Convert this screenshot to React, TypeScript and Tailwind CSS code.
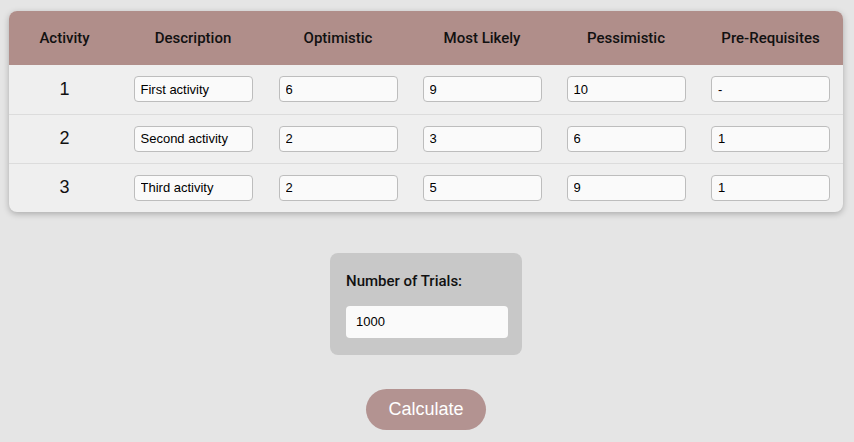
import { useState } from 'react'

type Row = {
  id: number
  description: string
  optimistic: string
  mostLikely: string
  pessimistic: string
  prereq: string
}

const initialRows: Row[] = [
  { id: 1, description: 'First activity', optimistic: '6', mostLikely: '9', pessimistic: '10', prereq: '-' },
  { id: 2, description: 'Second activity', optimistic: '2', mostLikely: '3', pessimistic: '6', prereq: '1' },
  { id: 3, description: 'Third activity', optimistic: '2', mostLikely: '5', pessimistic: '9', prereq: '1' },
]

const headers = ['Activity', 'Description', 'Optimistic', 'Most Likely', 'Pessimistic', 'Pre-Requisites']

const CellInput = ({ value, onChange }: { value: string; onChange: (v: string) => void }) => (
  <input
    className="h-[26px] w-[119px] rounded-[4px] border border-[#bdbdbd] bg-[#fafafa] px-[6px] font-['Liberation_Sans',Arial,sans-serif] text-[13px] text-black outline-none"
    value={value}
    onChange={(e) => onChange(e.target.value)}
  />
)

export default function App() {
  const [rows, setRows] = useState(initialRows)
  const [trials, setTrials] = useState('1000')

  const update = (id: number, key: keyof Row, v: string) =>
    setRows((rs) => rs.map((r) => (r.id === id ? { ...r, [key]: v } : r)))

  return (
    <div className="min-h-[442px] bg-[#e5e5e5] pl-[9px] pr-[11px] pt-[11px] font-['Roboto',sans-serif]">
      <div className="overflow-hidden rounded-[8px] bg-[#efefef] shadow-[0_2px_6px_rgba(0,0,0,0.25)]">
        <table className="w-full table-fixed border-collapse">
          <colgroup>
            <col className="w-[111px]" />
            <col className="w-[146px]" />
            <col className="w-[144px]" />
            <col className="w-[144px]" />
            <col className="w-[144px]" />
            <col className="w-[145px]" />
          </colgroup>
          <thead>
            <tr className="h-[54px] bg-[#b08e8a]">
              {headers.map((h) => (
                <th key={h} className="text-center text-[15px] font-medium text-[#111]">
                  {h}
                </th>
              ))}
            </tr>
          </thead>
          <tbody>
            {rows.map((r, i) => (
              <tr key={r.id} className={`h-[49px] ${i > 0 ? 'border-t border-[#dcdcdc]' : ''}`}>
                <td className="text-center font-['Liberation_Sans',Arial,sans-serif] text-[18px] text-[#111]">{r.id}</td>
                <td className="text-center">
                  <CellInput value={r.description} onChange={(v) => update(r.id, 'description', v)} />
                </td>
                <td className="text-center">
                  <CellInput value={r.optimistic} onChange={(v) => update(r.id, 'optimistic', v)} />
                </td>
                <td className="text-center">
                  <CellInput value={r.mostLikely} onChange={(v) => update(r.id, 'mostLikely', v)} />
                </td>
                <td className="text-center">
                  <CellInput value={r.pessimistic} onChange={(v) => update(r.id, 'pessimistic', v)} />
                </td>
                <td className="text-center">
                  <CellInput value={r.prereq} onChange={(v) => update(r.id, 'prereq', v)} />
                </td>
              </tr>
            ))}
          </tbody>
        </table>
      </div>

      <div className="mt-[41px] flex justify-center">
        <div className="w-[192px] rounded-[8px] bg-[#c8c8c8] px-4 pt-[17px] pb-[17px]">
          <label className="block text-[15px] font-medium text-[#111]">Number of Trials:</label>
          <input
            className="mt-[13px] h-[32px] w-[162px] rounded-[4px] bg-[#fafafa] px-[10px] font-['Liberation_Sans',Arial,sans-serif] text-[13px] text-black outline-none"
            value={trials}
            onChange={(e) => setTrials(e.target.value)}
          />
        </div>
      </div>

      <div className="mt-[34px] flex justify-center">
        <button className="h-[41px] w-[120px] rounded-full bg-[#b39391] font-['Liberation_Sans',Arial,sans-serif] text-[18px] text-white">
          Calculate
        </button>
      </div>
    </div>
  )
}
